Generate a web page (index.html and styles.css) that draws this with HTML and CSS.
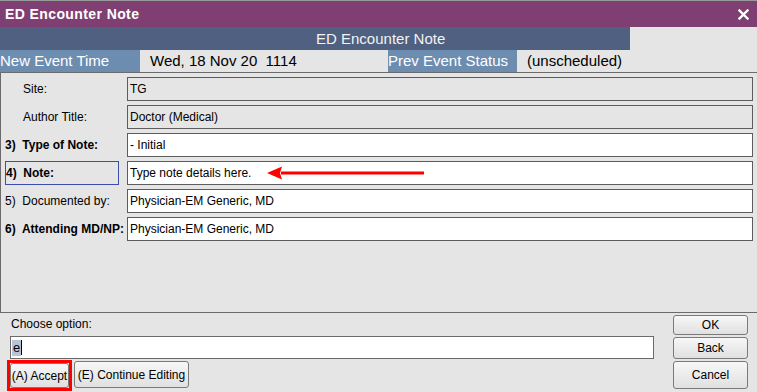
FILE: index.html
```html
<!DOCTYPE html>
<html lang="en">
<head>
  <meta charset="UTF-8" />
  <meta name="viewport" content="width=device-width, initial-scale=1.0" />
  <title>ED Encounter Note</title>
  <link rel="stylesheet" href="styles.css">
</head>
<body>
  <div class="titlebar">
    <span class="title">ED Encounter Note</span>
    <svg class="close" width="11" height="11" viewBox="0 0 11 11">
      <path d="M1.5 1.5 L9.5 9.5 M9.5 1.5 L1.5 9.5" stroke="#fff" stroke-width="2.4" stroke-linecap="square" />
    </svg>
  </div>

  <div class="header">
    <div class="header-title">ED Encounter Note</div>
  </div>

  <div class="event-row">
    <div class="event-label first">New Event Time</div>
    <div class="event-value first">Wed, 18 Nov 20&nbsp; 1114</div>
    <div class="event-label second">Prev Event Status</div>
    <div class="event-value">(unscheduled)</div>
  </div>

  <div class="form">
    <div class="row">
      <div class="label indent">Site:</div>
      <div class="field readonly">TG</div>
    </div>
    <div class="row">
      <div class="label indent">Author Title:</div>
      <div class="field readonly">Doctor (Medical)</div>
    </div>
    <div class="row">
      <div class="label bold">3)&nbsp; Type of Note:</div>
      <div class="field">- Initial</div>
    </div>
    <div class="row">
      <div class="label bold focused">4)&nbsp; Note:</div>
      <div class="field">
        Type note details here.
        <svg class="arrow" width="160" height="14" viewBox="0 0 160 14">
          <path d="M14 5.5 H157 V8.5 H14 Z" fill="#f00" />
          <path d="M0 7 L15 0.5 L13 7 L15 13.5 Z" fill="#f00" />
        </svg>
      </div>
    </div>
    <div class="row">
      <div class="label">5)&nbsp; Documented by:</div>
      <div class="field">Physician-EM Generic, MD</div>
    </div>
    <div class="row">
      <div class="label bold">6)&nbsp; Attending MD/NP:</div>
      <div class="field">Physician-EM Generic, MD</div>
    </div>
  </div>

  <div class="bottom">
    <div class="choose">
      <div class="choose-label">Choose option:</div>
      <div class="choose-input"><span class="sel">e</span><span class="caret"></span></div>
      <div class="options">
        <div class="highlight"><button class="btn accept">(A) Accept</button></div>
        <button class="btn edit">(E) Continue Editing</button>
      </div>
    </div>
    <div class="actions">
      <button class="btn ok">OK</button>
      <button class="btn back">Back</button>
      <button class="btn cancel">Cancel</button>
    </div>
  </div>
</body>
</html>
```

FILE: styles.css
```css
body {
  margin: 0;
  width: 757px;
  height: 392px;
  overflow: hidden;
  background: #e5e5e5;
  font-family: 'Liberation Sans', Arial, sans-serif;
  font-size: 12px;
  color: #000;
}
.titlebar {
  height: 26px;
  border-top: 1px solid #9a9a9a;
  background: #7f3f73;
  display: flex;
  align-items: center;
  justify-content: space-between;
  padding: 0 8px 0 5px;
}
.title {
  color: #fff;
  font-weight: bold;
  font-size: 14px;
  letter-spacing: 0.4px;
}
.close {
  display: block;
}
.header {
  height: 23px;
}
.header-title {
  width: 630px;
  height: 23px;
  line-height: 23px;
  background: #4f6080;
  color: #f2f2f2;
  font-size: 15px;
  padding-left: 316px;
  box-sizing: border-box;
}
.event-row {
  display: flex;
  height: 22px;
  line-height: 22px;
  font-size: 15px;
}
.event-label {
  background: #6d8db0;
  color: #fff;
}
.event-label.first {
  width: 140px;
}
.event-label.second {
  width: 129px;
}
.event-value {
  color: #000;
  padding-left: 10px;
}
.event-value.first {
  width: 238px;
}
.form {
  border-top: 1px solid #6b6b6b;
  border-bottom: 1px solid #6b6b6b;
  border-left: 1px solid #6b6b6b;
  padding: 4px 4px 0 0;
  box-sizing: border-box;
  height: 241px;
  display: flex;
  flex-direction: column;
  gap: 4px;
}
.row {
  display: flex;
  height: 24px;
}
.label {
  width: 126px;
  padding-left: 4px;
  box-sizing: border-box;
  line-height: 24px;
}
.label.indent {
  padding-left: 22px;
}
.label.bold {
  font-weight: bold;
}
.label.focused {
  width: 114px;
  margin-left: 4px;
  margin-right: 8px;
  border: 1px solid #3b4ea8;
  line-height: 22px;
  height: 24px;
  box-sizing: border-box;
  padding-left: 0;
}
.field {
  flex: 1;
  background: #fff;
  border: 1px solid #5c5c5c;
  line-height: 22px;
  padding-left: 2px;
  display: flex;
  align-items: center;
}
.field.readonly {
  background: #e5e5e5;
}
.arrow {
  margin-left: 16px;
}
.bottom {
  display: flex;
  justify-content: space-between;
}
.choose {
  padding-left: 7px;
}
.choose-label {
  height: 23px;
  line-height: 23px;
  padding-left: 4px;
}
.choose-input {
  width: 641px;
  height: 21px;
  margin-left: 3px;
  background: #fff;
  border: 1px solid #6b6b6b;
  display: flex;
  align-items: center;
  padding-left: 1px;
  font-size: 13px;
}
.sel {
  background: #b9c3d6;
  padding: 0 1px;
  line-height: 16px;
}
.caret {
  width: 1px;
  height: 15px;
  background: #000;
}
.options {
  display: flex;
  align-items: flex-start;
  margin-top: 1px;
  gap: 2px;
}
.highlight {
  border: 3px solid #f00;
}
.btn {
  font-family: 'Liberation Sans', Arial, sans-serif;
  font-size: 12px;
  color: #000;
  background: linear-gradient(#f7f7f7, #e0e0e0);
  border: 1px solid #7a7a7a;
  border-radius: 3px;
  padding: 0;
  margin: 0;
  display: block;
}
.accept {
  width: 59px;
  height: 25px;
}
.edit {
  width: 115px;
  height: 27px;
  margin-top: 1px;
}
.actions {
  width: 75px;
  margin-right: 9px;
  padding-top: 2px;
  display: flex;
  flex-direction: column;
  gap: 2px;
}
.ok {
  height: 20px;
  width: 75px;
}
.back {
  height: 22px;
  width: 75px;
}
.cancel {
  height: 28px;
  width: 75px;
}
```
